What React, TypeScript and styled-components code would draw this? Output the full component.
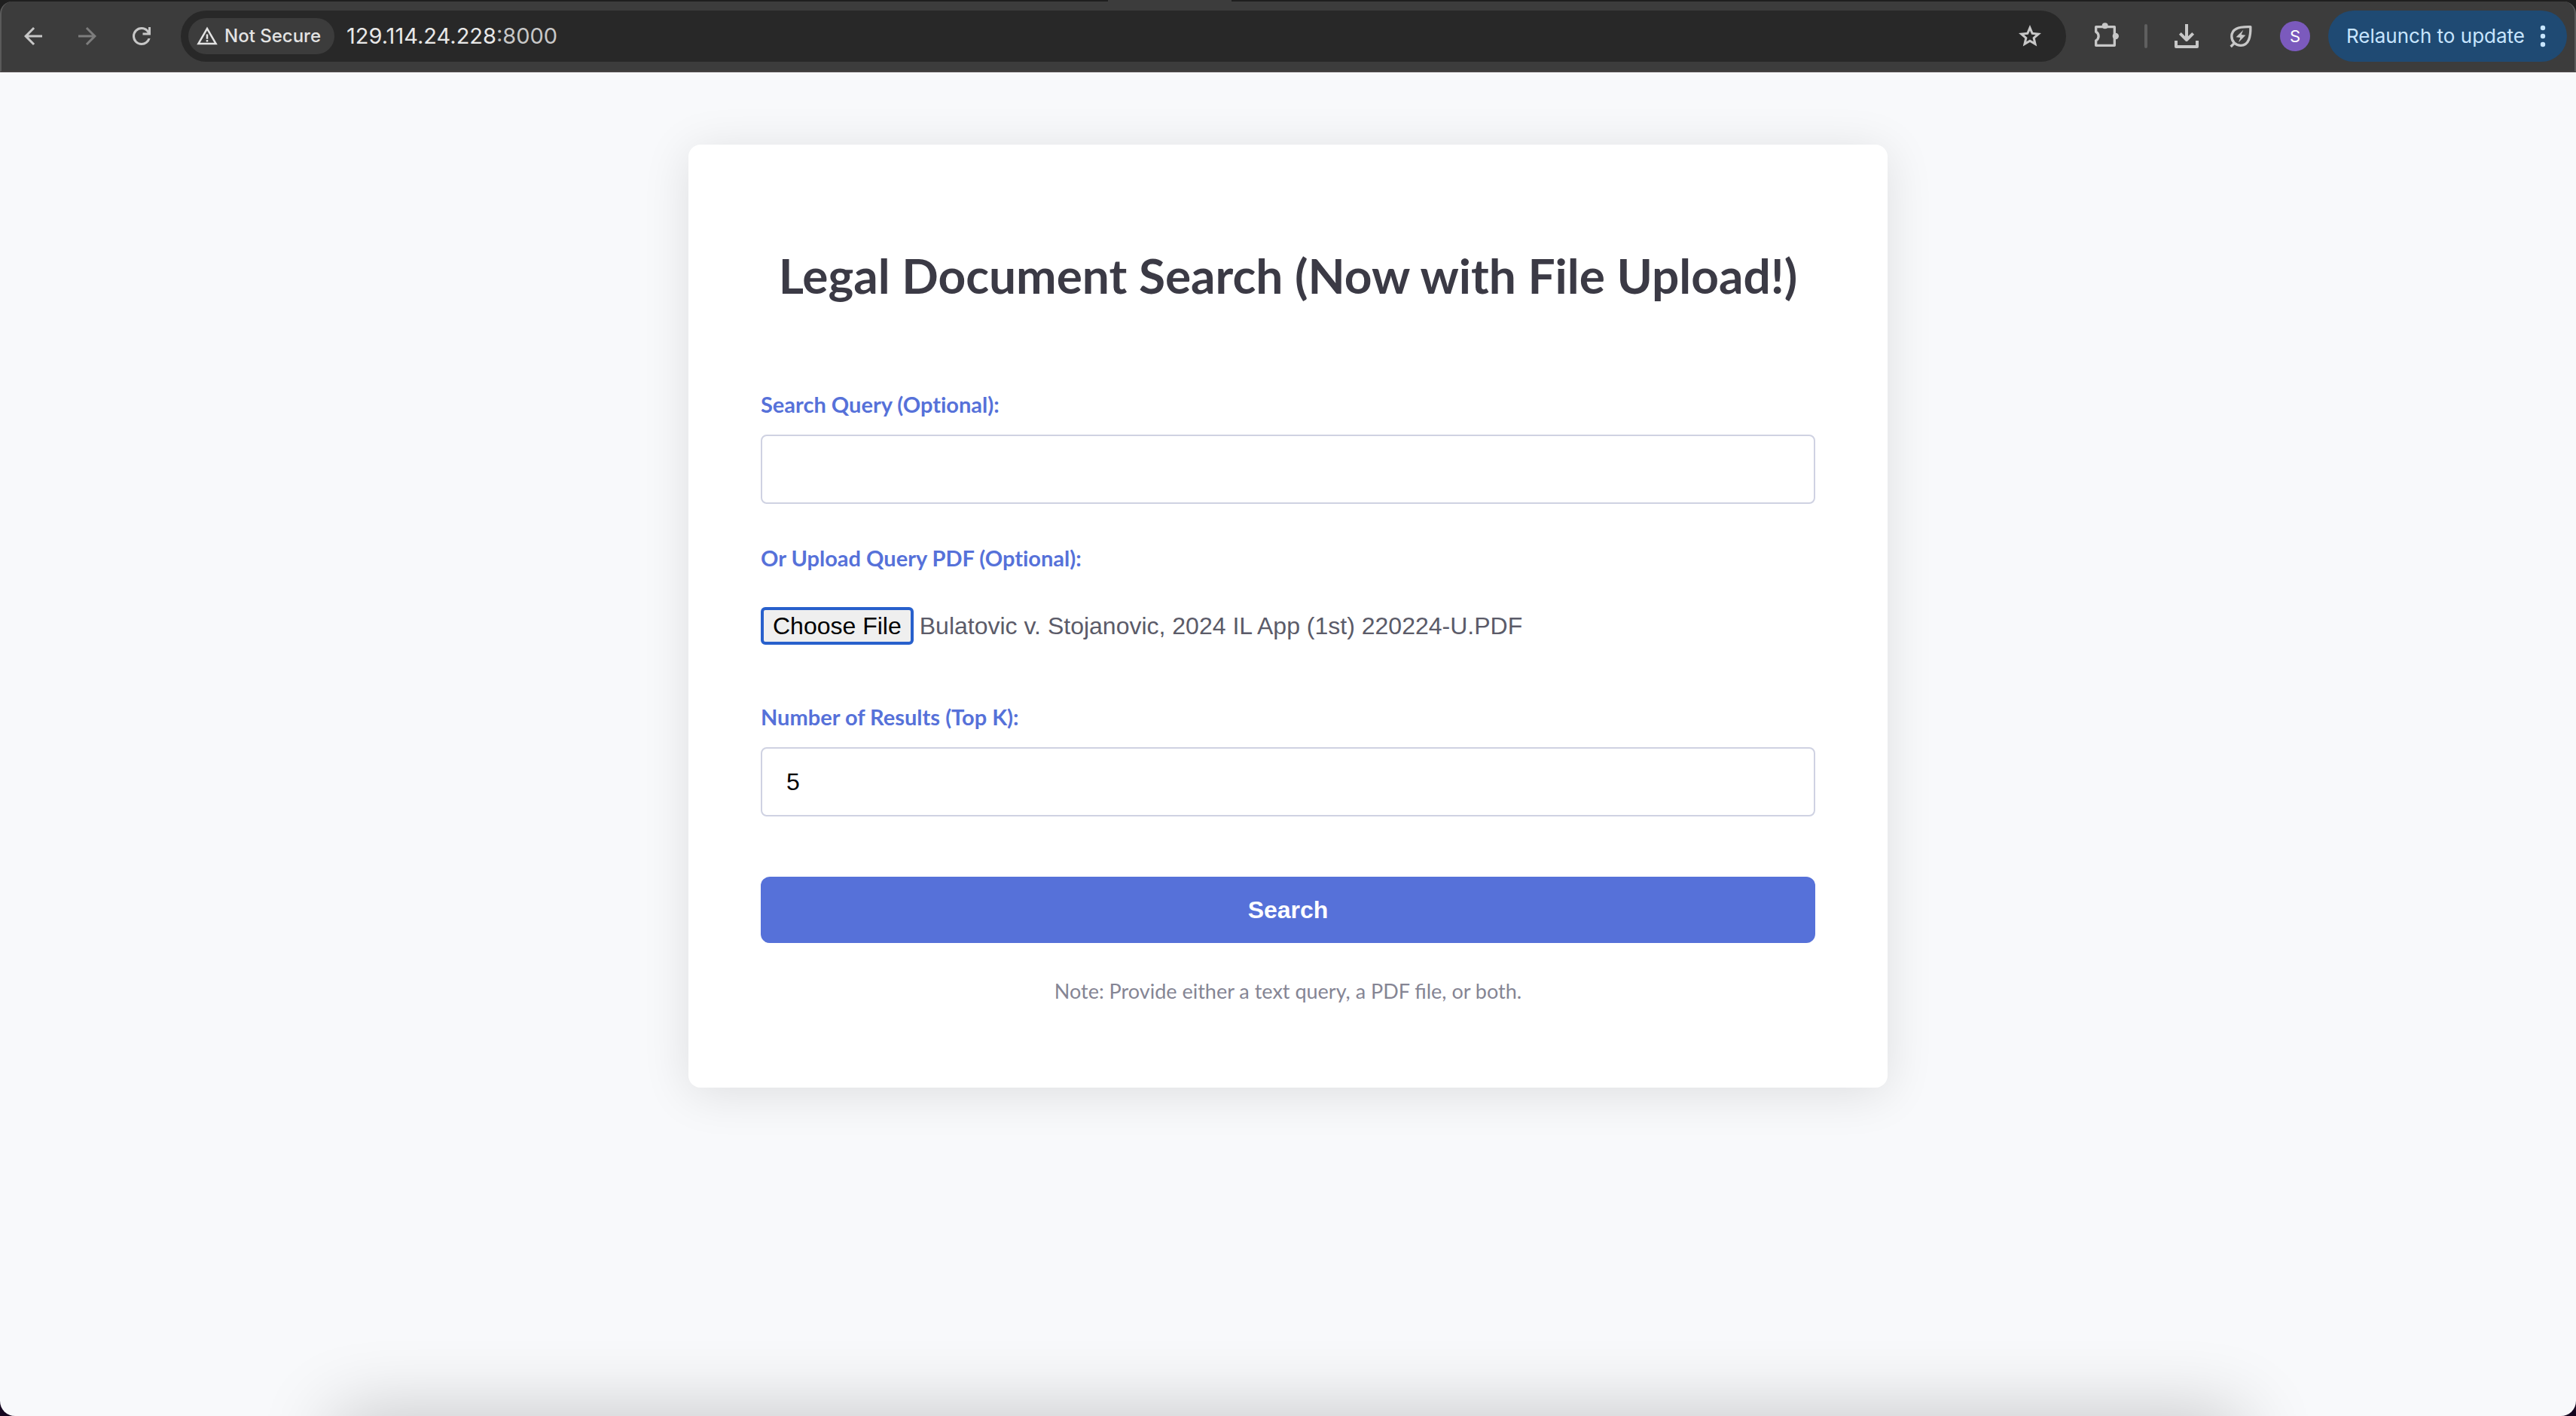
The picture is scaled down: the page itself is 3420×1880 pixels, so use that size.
import React, { useEffect, useRef } from 'react';
import styled, { createGlobalStyle } from 'styled-components';

const Global = createGlobalStyle`
  *, *::before, *::after { box-sizing: border-box; }
  html { height: 100%; background: #14061f; }
  body { margin: 0; height: 100%; }
  #root { height: 100%; }
`;

const Window = styled.div`
  position: relative;
  display: flex;
  flex-direction: column;
  min-height: 100%;
  overflow: hidden;
  border-radius: 0 0 20px 20px;
  background: #f8f9fb;
`;

const BrowserHeader = styled.header`
  background: #1f1f1f;
`;

const TabStrip = styled.div`
  display: flex;
  height: 2px;
`;

const ActiveTab = styled.div`
  width: 164px;
  margin-left: 43%;
  background: #3c3c3c;
`;

const Toolbar = styled.div`
  display: flex;
  align-items: center;
  height: 94px;
  padding: 0 10px 0 6px;
  background: #3c3c3c;
  border: 2px solid #5a5a5a;
  border-top: 0;
  border-bottom-color: #474343;
  border-radius: 16px 16px 0 0;
  font-family: Inter, "Liberation Sans", sans-serif;
`;

const IconButton = styled.button<{ $dim?: boolean }>`
  display: flex;
  align-items: center;
  justify-content: center;
  width: 72px;
  height: 68px;
  padding: 0;
  border: 0;
  background: none;
  color: ${(p) => (p.$dim ? '#7d7d7d' : '#c7c7c7')};
`;

const AddressBar = styled.div`
  display: flex;
  flex: 1;
  align-items: center;
  height: 68px;
  margin: 0 16px;
  padding: 0 12px 0 10px;
  border-radius: 34px;
  background: #282828;
`;

const SecurityChip = styled.button`
  display: flex;
  align-items: center;
  gap: 8px;
  height: 48px;
  padding: 0 18px 0 10px;
  border: 0;
  border-radius: 24px;
  background: #3c3c3c;
  color: #e3e3e3;
  font: 500 24px/32px Inter, sans-serif;
  white-space: nowrap;
`;

const Address = styled.div`
  flex: 1;
  padding-left: 16px;
  color: #c7c7c7;
  font: 400 29px/36px Inter, sans-serif;

  b { color: #e8e8e8; font-weight: 400; }
`;

const Divider = styled.span`
  width: 4px;
  height: 32px;
  margin: 0 16px;
  border-radius: 2px;
  background: #5f5f5f;
`;

const Avatar = styled.button`
  width: 40px;
  height: 40px;
  margin: 0 24px 0 16px;
  padding: 0;
  border: 0;
  border-radius: 50%;
  background: #7b5abd;
  color: #fff;
  font: 400 22px/40px Inter, sans-serif;
`;

const Relaunch = styled.button`
  display: flex;
  align-items: center;
  gap: 20px;
  height: 68px;
  padding: 0 28px 0 24px;
  border: 0;
  border-radius: 34px;
  background: #1f4a73;
  color: #c7e5ff;
  font: 400 26px/36px Inter, sans-serif;
  white-space: nowrap;
`;

const Page = styled.main`
  flex: 1;
  padding: 96px 32px;
`;

const Card = styled.form`
  display: flex;
  flex-direction: column;
  max-width: 1592px;
  margin: 0 auto;
  padding: 96px;
  border-radius: 16px;
  background: #fff;
  box-shadow: 0 8px 64px rgba(0, 0, 0, 0.11);
  font-family: Lato, sans-serif;
`;

const Title = styled.h1`
  margin: 28px 0 97px;
  color: #3b3a45;
  font-size: 64px;
  line-height: 100px;
  font-weight: 700;
  text-align: center;
`;

const Label = styled.label`
  margin-bottom: 16px;
  color: #5671d9;
  font-size: 29px;
  line-height: 48px;
  font-weight: 700;
  font-variant-ligatures: none;
`;

const TextInput = styled.input`
  width: 100%;
  height: 92px;
  margin-bottom: 48px;
  padding: 0 32px;
  border: 2px solid #cfd2e2;
  border-radius: 8px;
  background: #fff;
  color: #000;
  font: 32px "Liberation Sans", Arial, sans-serif;
  appearance: textfield;

  &::-webkit-inner-spin-button { appearance: none; }
`;

const FileInput = styled.input`
  width: 100%;
  margin-bottom: 48px;
  padding: 25px 0 24px;
  color: #5b5b69;
  font: 32px/40px "Liberation Sans", Arial, sans-serif;

  &::file-selector-button {
    height: 50px;
    margin: 0 8px 0 0;
    padding: 0 12px;
    border: 4px solid #2860cc;
    border-radius: 6px;
    background: #efefef;
    color: #000;
    font: inherit;
  }
`;

const SubmitButton = styled.button`
  height: 88px;
  margin-top: 32px;
  border: 0;
  border-radius: 12px;
  background: #5671d9;
  color: #fff;
  font: 700 32px "Liberation Sans", Arial, sans-serif;
`;

const Note = styled.p`
  margin: 40px 0 8px;
  color: #858594;
  font-size: 27px;
  line-height: 48px;
  text-align: center;
`;

const DockShadow = styled.div`
  position: absolute;
  top: 100%;
  left: 13%;
  right: 13%;
  height: 80px;
  box-shadow: 0 0 100px rgba(0, 0, 0, 0.24);
`;

const Glyph = ({ size, d }: { size: number; d: string }) => (
  <svg width={size} height={size} viewBox="0 0 24 24" fill="currentColor" fillRule="evenodd" aria-hidden="true">
    <path d={d} />
  </svg>
);

const BACK = 'm7.825 13 5.6 5.6L12 20l-8-8 8-8 1.425 1.400-5.600 5.600H20v2H7.825Z';
const FORWARD = 'M16.175 13H4v-2h12.175l-5.600-5.600L12 4l8 8-8 8-1.425-1.400 5.600-5.600Z';
const RELOAD =
  'M12 20q-3.350 0-5.675-2.325T4 12t2.325-5.675T12 4q1.725 0 3.300.713T18 6.750V4h2v7h-7V9h4.200q-.8-1.400-2.187-2.200T12 6Q9.500 6 7.750 7.750T6 12t1.750 4.250T12 18q1.925 0 3.475-1.100T17.650 14h2.100q-.7 2.650-2.850 4.325T12 20Z';
const STAR =
  'M8.850 16.825 12 14.925l3.150 1.925-.825-3.600 2.775-2.400-3.650-.325-1.450-3.400-1.450 3.375-3.650.325 2.775 2.425-.825 3.575ZM5.825 21l1.625-7.025L2 9.250l7.200-.625L12 2l2.800 6.625 7.200.625-5.450 4.725L18.175 21 12 17.275 5.825 21Z';
const WARNING = 'M1 21 12 2l11 19H1Zm3.450-2h15.100L12 6 4.450 19ZM11 16h2v2h-2ZM11 10h2v5h-2Z';

export default function App() {
  const fileRef = useRef<HTMLInputElement>(null);

  useEffect(() => {
    const transfer = new DataTransfer();
    transfer.items.add(
      new File([''], 'Bulatovic v. Stojanovic, 2024 IL App (1st) 220224-U.PDF', { type: 'application/pdf' }),
    );
    if (fileRef.current) fileRef.current.files = transfer.files;
  }, []);

  return (
    <Window>
      <Global />
      <BrowserHeader>
        <TabStrip><ActiveTab /></TabStrip>
        <Toolbar>
          <IconButton aria-label="Back"><Glyph size={36} d={BACK} /></IconButton>
          <IconButton aria-label="Forward" $dim><Glyph size={36} d={FORWARD} /></IconButton>
          <IconButton aria-label="Reload"><Glyph size={36} d={RELOAD} /></IconButton>
          <AddressBar>
            <SecurityChip>
              <Glyph size={30} d={WARNING} />
              Not Secure
            </SecurityChip>
            <Address><b>129.114.24.228</b>:8000</Address>
            <IconButton aria-label="Bookmark"><Glyph size={36} d={STAR} /></IconButton>
          </AddressBar>
          <IconButton aria-label="Extensions">
            <svg width="40" height="40" viewBox="0 0 24 24" fill="none" stroke="currentColor" strokeWidth="2" strokeLinejoin="round" aria-hidden="true">
              <path d="M4.600 4.600H19.400V19.400H4.600V15.500A4 4 0 0 0 4.600 8.500Z" />
              <path d="M9.300 4.200A2.600 2.600 0 0 1 14.300 4.200ZM19.800 9.500A2.600 2.600 0 0 1 19.800 14.500Z" fill="currentColor" stroke="none" />
              <circle cx="11.800" cy="3.800" r="2.400" fill="currentColor" stroke="none" />
              <circle cx="20.300" cy="12" r="2.500" fill="currentColor" stroke="none" />
            </svg>
          </IconButton>
          <Divider />
          <IconButton aria-label="Downloads">
            <svg width="40" height="40" viewBox="0 0 24 24" fill="none" stroke="currentColor" strokeWidth="2.400" strokeLinejoin="round" aria-hidden="true">
              <path d="M12 2.400V14.500M6.800 9.800L12 15L17.200 9.800M3.600 15.600V20.400H20.400V15.600" />
            </svg>
          </IconButton>
          <IconButton aria-label="Energy saver">
            <svg width="40" height="40" viewBox="0 0 24 24" fill="none" stroke="currentColor" strokeWidth="2" strokeLinejoin="round" aria-hidden="true">
              <path d="M19.700 4.600C19.900 12 18.500 19.400 12 19.400C7.800 19.400 4.700 16.300 4.700 12.200C4.700 6.500 9.500 4.200 19.700 4.600ZM4 20.400L7.200 17.200" />
              <path d="M14 7L8.200 12.800L11.600 13.200L10.200 17L15.800 11.200L12.400 10.800Z" fill="currentColor" stroke="none" />
            </svg>
          </IconButton>
          <Avatar aria-label="Profile">S</Avatar>
          <Relaunch>
            Relaunch to update
            <svg width="8" height="32" viewBox="0 0 8 32" fill="currentColor" aria-hidden="true">
              <circle cx="4" cy="5" r="3.200" /><circle cx="4" cy="16" r="3.200" /><circle cx="4" cy="27" r="3.200" />
            </svg>
          </Relaunch>
        </Toolbar>
      </BrowserHeader>
      <Page>
        <Card onSubmit={(e) => e.preventDefault()}>
          <Title>Legal Document Search (Now with File Upload!)</Title>
          <Label htmlFor="query">Search Query (Optional):</Label>
          <TextInput id="query" type="text" />
          <Label htmlFor="pdf">Or Upload Query PDF (Optional):</Label>
          <FileInput id="pdf" type="file" accept=".pdf" ref={fileRef} />
          <Label htmlFor="topk">Number of Results (Top K):</Label>
          <TextInput id="topk" type="number" defaultValue={5} />
          <SubmitButton type="submit">Search</SubmitButton>
          <Note>Note: Provide either a text query, a PDF file, or both.</Note>
        </Card>
      </Page>
      <DockShadow />
    </Window>
  );
}
